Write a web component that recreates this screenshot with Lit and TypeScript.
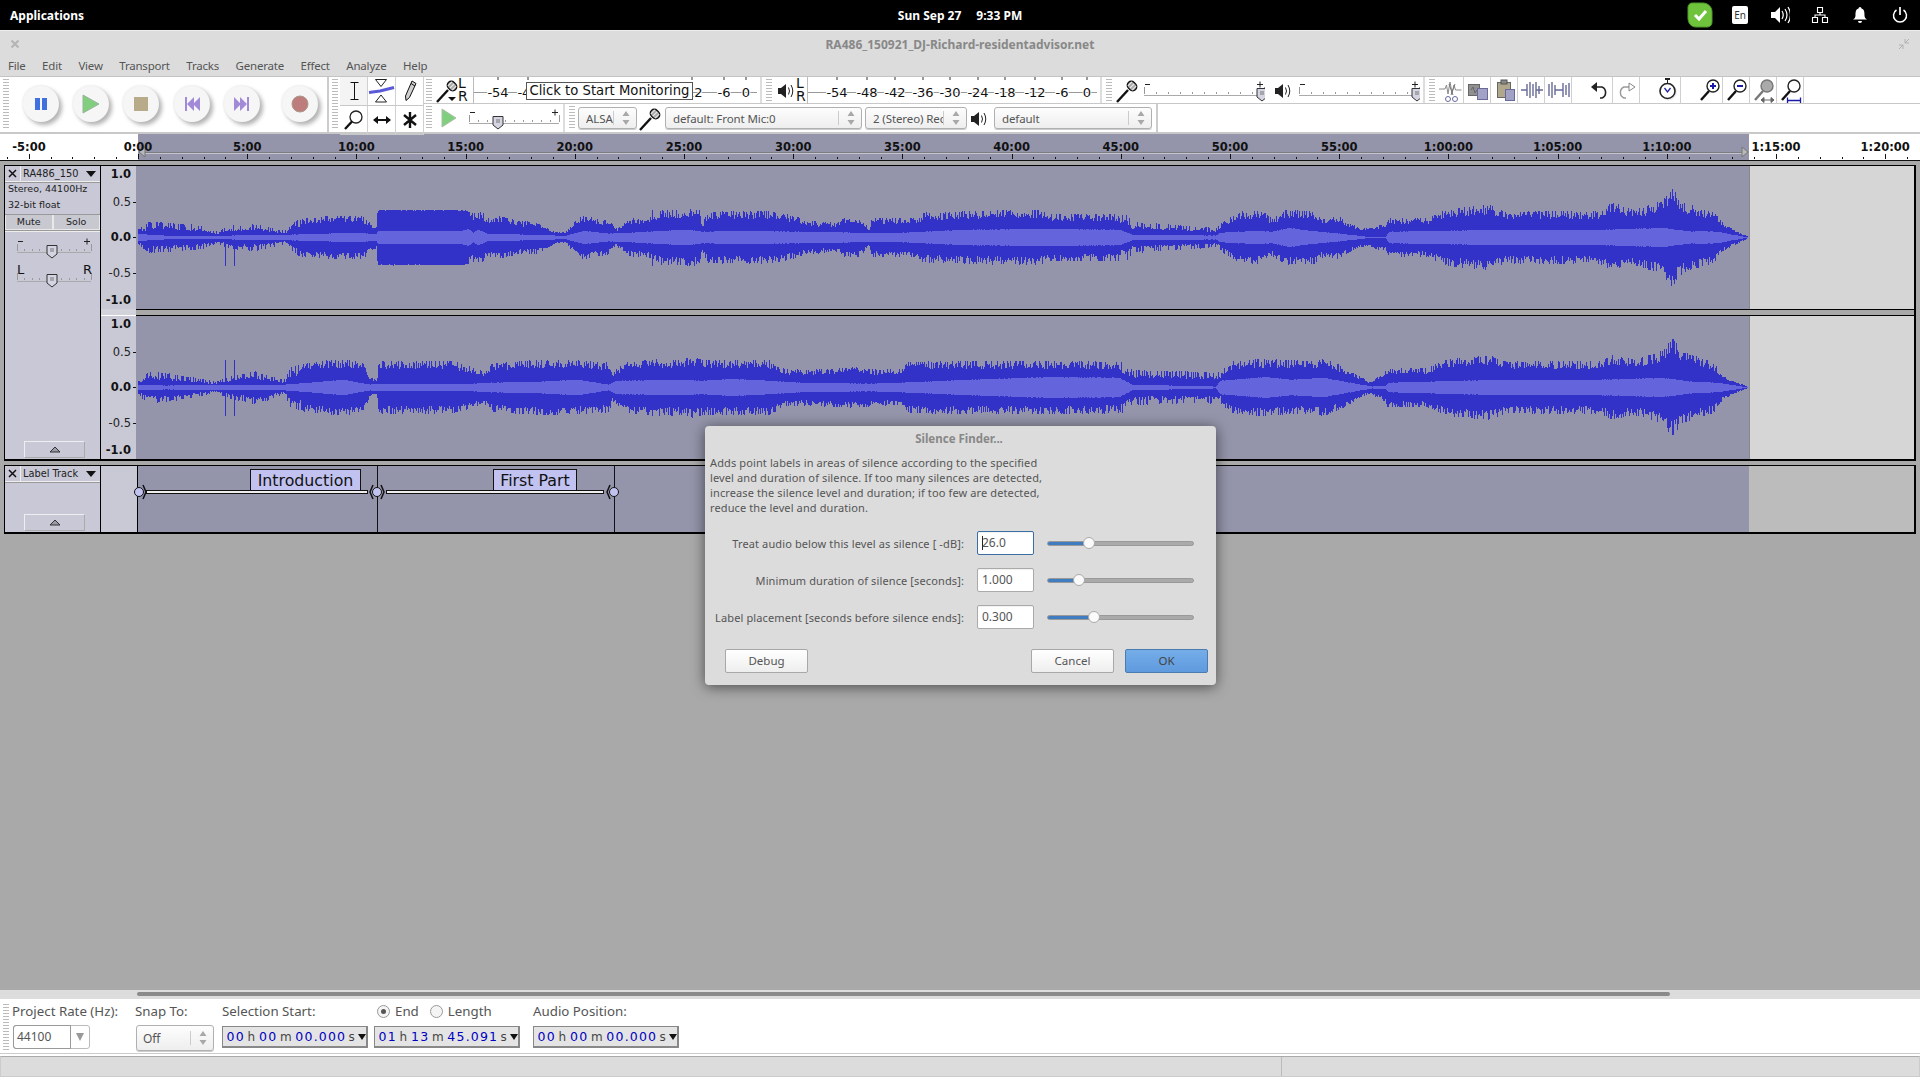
import { LitElement, html, css, svg } from "lit";
import { customElement } from "lit/decorators.js";

type Pt = [number, number];
const z = (x0: number, s: number, a: Pt[]): Pt[] => a.map(([x, v]) => [x0 + x / s, v] as Pt);

const P1: Pt[] = [
  ...z(130, 2.8, [[22,8],[50,16],[100,16],[200,12],[240,6],[280,12],[350,14],[430,7],[470,19],[560,22],[650,22],[680,12],[690,12],[692,28],[940,28],[955,25],[985,26],[1000,19],[1030,22],[1100,16],[1135,17],[1190,6],[1220,6],[1250,19],[1270,22],[1340,17],[1360,9],[1400,19],[1460,21],[1490,28]]),
  ...z(680, 2.8, [[0,28],[30,29],[55,28],[60,12],[75,26],[250,27],[340,20],[345,17],[440,15],[460,20],[500,20],[530,10],[535,20],[660,20],[680,25],[800,27],[1000,28],[1030,24],[1250,24],[1265,16],[1500,10]]),
  ...z(1220, 2.9, [[0,14],[60,27],[120,27],[150,19],[190,28],[270,27],[300,19],[340,22],[400,10],[440,10],[470,14],[480,12],[485,20],[600,20],[670,30],[780,33],[830,26],[950,27],[1100,27],[1140,36],[1200,28],[1280,37],[1310,50],[1340,36],[1430,26],[1460,14],[1500,6],[1530,1]]),
];
const R1: Pt[] = [
  ...z(130, 2.8, [[22,4],[50,3],[100,2],[280,2],[450,3],[640,5],[690,3],[692,7],[930,7],[945,9],[960,5],[975,8],[1000,4],[1100,3],[1190,2],[1220,2],[1270,7],[1340,4],[1400,5],[1540,8]]),
  ...z(680, 2.8, [[0,8],[55,7],[60,6],[150,7],[340,6],[500,5],[620,5],[800,8],[1040,9],[1230,8],[1265,3],[1500,2]]),
  ...z(1220, 2.9, [[0,5],[100,7],[150,6],[200,10],[260,7],[350,4],[420,1],[480,1],[490,6],[800,8],[1100,8],[1280,10],[1370,6],[1380,7],[1440,6],[1500,2],[1530,0]]),
];
const P2: Pt[] = [
  ...z(130, 2.8, [[22,8],[50,16],[100,15],[240,6],[283,12],[350,17],[430,8],[450,22],[550,28],[650,28],[670,10],[690,8],[695,27],[900,27],[990,17],[1015,25],[1140,28],[1230,28],[1340,25],[1350,14],[1380,26],[1490,29]]),
  ...z(680, 2.8, [[0,28],[30,31],[60,28],[250,28],[290,19],[340,18],[500,21],[535,19],[620,18],[628,26],[800,27],[1000,27],[1250,26],[1265,18],[1500,16]]),
  ...z(1220, 2.9, [[0,16],[30,26],[110,29],[260,27],[300,29],[340,24],[430,6],[470,13],[485,20],[600,20],[670,30],[780,33],[830,26],[950,27],[1100,27],[1140,33],[1200,28],[1280,37],[1310,50],[1340,36],[1430,26],[1460,12],[1500,5],[1530,1]]),
];
const R2: Pt[] = [
  ...z(130, 2.8, [[22,3],[100,2],[280,3],[430,3],[600,8],[670,3],[695,4],[960,4],[1010,5],[1140,6],[1250,8],[1340,3],[1360,7],[1540,8]]),
  ...z(680, 2.8, [[0,8],[60,7],[150,9],[340,5],[530,4],[620,5],[800,8],[1040,11],[1230,10],[1265,3],[1500,1]]),
  ...z(1220, 2.9, [[0,7],[130,11],[200,8],[300,10],[440,1],[480,2],[490,5],[800,8],[1100,8],[1280,10],[1370,6],[1440,5],[1530,0]]),
];

const lerp = (p: Pt[], x: number) => {
  if (x <= p[0][0]) return p[0][1];
  for (let i = 1; i < p.length; i++) {
    if (x <= p[i][0]) {
      const t = (x - p[i - 1][0]) / Math.max(0.01, p[i][0] - p[i - 1][0]);
      return p[i - 1][1] + (p[i][1] - p[i - 1][1]) * t;
    }
  }
  return p[p.length - 1][1];
};

const SPIKY: [number, number][] = [[140, 240], [240, 300], [1120, 1220]];

function wave(peak: Pt[], rms: Pt[], seed: number, smooth: [number, number][], topSpikes: number[], botSpikes: number[]) {
  let s = seed;
  const rnd = () => {
    s = (s * 1664525 + 1013904223) >>> 0;
    return ((s >>> 8) & 0xffff) / 65535;
  };
  const c = 71.5;
  let dark = "";
  let light = "";
  for (let x = 138; x < 1748; x++) {
    const a = lerp(peak, x);
    const r = lerp(rms, x);
    const sm = smooth.some(([l, h]) => x >= l && x <= h);
    const spiky = SPIKY.some(([l, h]) => x >= l && x <= h);
    const j = () => {
      if (sm) return 0.96 + 0.04 * rnd();
      if (spiky) return rnd() < 0.35 ? 0.9 + 0.1 * rnd() : 0.5 + 0.25 * rnd();
      return rnd() < 0.28 ? 0.95 + 0.05 * rnd() : 0.68 + 0.24 * rnd();
    };
    const t = topSpikes.some((v) => Math.abs(v - x) < 0.6) ? 28 : a * j();
    const b = botSpikes.some((v) => Math.abs(v - x) < 0.6) ? 28 : a * j();
    const rt = Math.max(0.5, r * (0.92 + 0.08 * rnd()));
    const px = x - 136 + 0.5;
    dark += `M${px} ${(c - t).toFixed(0)}V${(c + b).toFixed(0)}`;
    light += `M${px} ${(c - rt).toFixed(0)}V${(c + rt).toFixed(0)}`;
  }
  return { dark, light };
}

const W1 = wave(P1, R1, 7, [[377, 468]], [652], [225, 234, 652]);
const W2 = wave(P2, R2, 91, [], [225, 234, 652], [225, 234, 652]);

const rulerLabels: [string, number][] = [
  ["-5:00", 29], ["0:00", 138], ["5:00", 247.2], ["10:00", 356.4], ["15:00", 465.6], ["20:00", 574.8], ["25:00", 684],
  ["30:00", 793.2], ["35:00", 902.4], ["40:00", 1011.6], ["45:00", 1120.8], ["50:00", 1230], ["55:00", 1339.2],
  ["1:00:00", 1448.4], ["1:05:00", 1557.6], ["1:10:00", 1666.8], ["1:15:00", 1776], ["1:20:00", 1885.2],
];

const ruler = () => {
  const ticks: string[] = [];
  for (let i = -6; i <= 81; i++) {
    const x = Math.round(138 + i * 21.84) + 0.5;
    ticks.push(`M${x} ${i % 5 === 0 ? 20 : 23}V25`);
  }
  return html`<svg class="ruler" width="1920" height="26" viewBox="0 0 1920 26">
    <rect width="1920" height="26" fill="#fff"></rect>
    <rect x="138" width="1611" height="26" fill="#9494aa"></rect>
    <path d="M142 18.5H1743" stroke="#7c7c84" stroke-width="1"></path>
    <path d="M142 19.5H1743" stroke="#c4c4cc" stroke-width="1"></path>
    <path d="${ticks.join("")}" stroke="#111" stroke-width="1" fill="none"></path>
    <path d="M145 13V23L139 18Z" fill="#b8b8b8" stroke="#777"></path>
    <path d="M1742 13V23L1748 18Z" fill="#b8b8b8" stroke="#777"></path>
    ${rulerLabels.map(([t, x]) => svg`<text x="${x}" y="17" text-anchor="middle" class="rt">${t}</text>`)}
  </svg>`;
};

const meter = (w: number, labels: [string, number][]) => html`<svg class="block" width="${w}" height="27" viewBox="0 0 ${w} 27">
  <path d="M0 15.5H${w}" stroke="#999"></path>
  <path d="${labels.map(([, x]) => `M${x} 0V3`).join("")}" stroke="#333"></path>
  ${labels.map(([t, x]) => svg`<text x="${x}" y="20" text-anchor="middle" class="mt">${t}</text>`)}
</svg>`;

const slider = (w: number, th: number, minus = true) => html`<svg class="block" width="${w}" height="27" viewBox="0 0 ${w} 27">
  <path d="M1 18.5H${w - 1}" stroke="#aaa"></path>
  <path d="${Array.from({ length: 11 }, (_, i) => `M${Math.round(1 + (i * (w - 2)) / 10)}.5 ${i === 0 || i === 10 ? 10 : 15}V17`).join("")}" stroke="#999"></path>
  ${minus ? svg`<path d="M2 7.5H7" stroke="#222"></path><path d="M${w - 8} 7.5H${w - 2}M${w - 5} 4.5V10.5" stroke="#222"></path>` : ""}
  <path d="M${th - 5} 11.5h10v8.500l-5 4l-5 -4z" fill="#d4d4e2" stroke="#333"></path>
  <path d="M${th - 2} 15h4M${th - 2} 17h4" stroke="#777"></path>
</svg>`;

const I = {
  ibeam: html`<svg class="block" width="27" height="28"><path d="M10.500 5.500h8M14.500 5.500v17M10.500 22.500h8" stroke="#111" fill="none"></path></svg>`,
  env: html`<svg class="block" width="27" height="28"><path d="M7.5 2.5h11l-5.5 7zM13 18l5.5 7h-11z" fill="#fff" stroke="#222"></path><path d="M1 15.5 L12 14 L26 10.5" stroke="#5a5ad8" stroke-width="3" fill="none"></path></svg>`,
  pencil: html`<svg class="block" width="27" height="28"><path d="M16 4l4 2.5-6.5 14-3.5 3-.5-4.5z" fill="#d0d0d0" stroke="#111"></path><path d="M15 6.5l4 2.5" stroke="#111"></path></svg>`,
  zoom: html`<svg class="block" width="27" height="28"><circle cx="16" cy="11" r="6" fill="#fff" stroke="#222" stroke-width="1.3"></circle><path d="M12 15.5L5 23" stroke="#111" stroke-width="2.4"></path></svg>`,
  shift: html`<svg class="block" width="27" height="28"><path d="M6 14h16" stroke="#111" stroke-width="2"></path><path d="M10 10L5 14l5 4zM18 10l5 4-5 4z" fill="#111"></path></svg>`,
  multi: html`<svg class="block" width="27" height="28"><path d="M14 6v16M8 9l12 10M20 9L8 19" stroke="#111" stroke-width="2.4"></path></svg>`,
  mic: (drop = true, w = 28) => html`<svg class="block" width="${w}" height="27"><path d="M14 13L3 25" stroke="#111" stroke-width="2.4"></path><g transform="rotate(45 18 9)"><rect x="13" y="5" width="10" height="8" rx="4" fill="#aaa" stroke="#111" stroke-width="1.4"></rect><path d="M15 6v6M18 6v6M21 6v6" stroke="#eee"></path></g>${drop ? svg`<path d="M14 20h8l-4 4z" fill="#111"></path>` : ""}</svg>`,
  spk: (w = 22) => html`<svg class="block" width="${w}" height="27"><path d="M4 11h3l5-4v14l-5-4H4z" fill="#222"></path><path d="M14.5 10.5q2 3.5 0 7M17 8q3.5 6 0 12" stroke="#222" fill="none"></path></svg>`,
  play: html`<svg class="block" width="31" height="28"><path d="M8 5l14 9-14 9z" fill="#7fcf7f" stroke="#aebfa8"></path></svg>`,
  cut: html`<svg class="block" width="27" height="27"><path d="M2 13h6l1.5-4 1.5 9 2-12 2 11 2-8 1.500 5h6" stroke="#8a8a8a" fill="none"></path><path d="M12 8l4 11M18 8l-4 11" stroke="#777"></path><circle cx="11" cy="23" r="2.500" fill="none" stroke="#6a6aa0"></circle><circle cx="18" cy="23" r="2.500" fill="none" stroke="#6a6aa0"></circle></svg>`,
  copy: html`<svg class="block" width="27" height="27"><rect x="4.500" y="8.500" width="11" height="11" fill="#909090" stroke="#666"></rect><rect x="13.500" y="12.500" width="10" height="11" fill="#a2a2c6" stroke="#6a6a98"></rect><path d="M7 14l2-3 2 6 2-3" stroke="#666" fill="none"></path></svg>`,
  paste: html`<svg class="block" width="27" height="27"><rect x="6.500" y="6.500" width="13" height="15" fill="#b0a88c" stroke="#666"></rect><rect x="10" y="4" width="6" height="4" fill="#888" stroke="#555"></rect><rect x="14.500" y="13.500" width="9" height="11" fill="#a2a2c6" stroke="#6a6a98"></rect></svg>`,
  trim: html`<svg class="block" width="27" height="27"><path d="M3 14h6M9 8v12M12 6v16M15 8v12M18 6v16M21 10v8M18 14h7" stroke="#666a96" stroke-width="1.4" fill="none"></path></svg>`,
  sil: html`<svg class="block" width="27" height="27"><path d="M4 8v12M7 6v16M10 9v10M10 14h8M18 7v14M21 9v10M24 7v14" stroke="#666a96" stroke-width="1.4" fill="none"></path></svg>`,
  undo: html`<svg class="block" width="27" height="27"><path d="M7 11h9a6 6 0 0 1 0 11h-2" stroke="#222" stroke-width="1.6" fill="none"></path><path d="M11 6L5 11l6 5z" fill="#222"></path></svg>`,
  redo: html`<svg class="block" width="27" height="27"><path d="M20 11h-9a6 6 0 0 0 0 11h2" stroke="#999" stroke-width="1.4" fill="none"></path><path d="M16 7l6 4-6 4z" fill="#fff" stroke="#888"></path></svg>`,
  timer: html`<svg class="block" width="27" height="27"><rect x="11" y="2" width="5" height="2" fill="#222"></rect><path d="M13.500 4v3" stroke="#222"></path><circle cx="14.500" cy="16" r="8.500" fill="#ddd" opacity=".5"></circle><circle cx="13.500" cy="15" r="7.500" fill="#fff" stroke="#222" stroke-width="1.600"></circle><path d="M10.500 12l3 4 3-4" stroke="#2222a0" stroke-width="1.300" fill="none"></path></svg>`,
  zm: (k: string) => html`<svg class="block" width="27" height="27"><path d="M13 15L5 24" stroke="${k === "fit" ? "#777" : "#111"}" stroke-width="2.400"></path><circle cx="17" cy="10" r="6" fill="${k === "fit" ? "#aaa" : "#fff"}" stroke="${k === "fit" ? "#777" : "#222"}" stroke-width="1.400"></circle>
    ${k === "in" ? svg`<path d="M14 10h6M17 7v6" stroke="#1a1aa8" stroke-width="2"></path>` : ""}
    ${k === "out" ? svg`<path d="M14 10h6" stroke="#1a1aa8" stroke-width="2"></path>` : ""}
    ${k === "fit" ? svg`<path d="M11 24h13M11 24l3-2.500v5zM24 24l-3-2.500v5z" stroke="#666" fill="#666"></path>` : ""}
    ${k === "sel" ? svg`<path d="M10 24.500h14M10.500 21.500v6M23.500 21.500v6" stroke="#1a1aa8" stroke-width="1.300"></path>` : ""}
  </svg>`,
  x: html`<svg class="block" width="15" height="15"><path d="M4 4l7 7M11 4l-7 7" stroke="#111" stroke-width="1.500"></path></svg>`,
  updown: html`<svg class="block" width="10" height="18"><path d="M1.500 7L5 2l3.500 5zM1.500 11L5 16l3.500-5z" fill="#a8a8a8"></path></svg>`,
  collapse: html`<svg class="block" width="12" height="7"><path d="M1 6L6 1l5 5z" fill="#9a9aa8" stroke="#333"></path></svg>`,
  handle: (left: boolean, right: boolean) => html`<svg class="block" width="16" height="20" viewBox="0 0 16 20">
    ${left ? svg`<path d="M4 3L1 10l3 7" fill="none" stroke="#111" stroke-width="1.500"></path>` : ""}
    ${right ? svg`<path d="M12 3l3 7-3 7" fill="none" stroke="#111" stroke-width="1.500"></path>` : ""}
    <circle cx="8" cy="10" r="4.500" fill="#c2c2ee" stroke="#111"></circle>
  </svg>`,
  ok: html`<svg class="block" width="26" height="26" viewBox="0 0 26 26"><path d="M5 1h11c4 0 9 3 9 9v10c0 3-2 5-5 5H9c-5 0-8-4-8-9V5c0-2 2-4 4-4z" fill="#6fc23c" stroke="#4f9a28"></path><path d="M8 13l4 4 7-8" stroke="#fff" stroke-width="3" fill="none"></path></svg>`,
  vol: html`<svg class="block" width="20" height="18"><path d="M1 6h4l5-5v16l-5-5H1z" fill="#fff"></path><path d="M12 5q2.500 4 0 8M15 3q4 6 0 12M18 1q5 8 0 16" fill="none" stroke="#fff" stroke-width="1.200"></path></svg>`,
  net: html`<svg class="block" width="18" height="18"><path d="M6.500 1.500h5v5h-5zM1.500 11.500h5v5h-5zM11.500 11.500h5v5h-5zM9 6.500v2.500M4 11.500V9h10v2.500" fill="none" stroke="#fff" stroke-width="1.100"></path></svg>`,
  bell: html`<svg class="block" width="16" height="18"><path d="M8 1a1.500 1.500 0 0 1 1.500 1.500c3 1 3 4 3 7 0 2 1 3 2.500 4H1c1.500-1 2.500-2 2.500-4 0-3 0-6 3-7A1.500 1.500 0 0 1 8 1zM6 15h4a2 2 0 0 1-4 0z" fill="#fff"></path></svg>`,
  power: html`<svg class="block" width="16" height="18"><path d="M8 1v8" stroke="#fff" stroke-width="1.700"></path><path d="M4.500 4a6.500 6.500 0 1 0 7 0" stroke="#fff" stroke-width="1.500" fill="none"></path></svg>`,
  unmax: html`<svg class="block" width="12" height="12"><path d="M11 1L7 5M7 1v4h4M1 11l4-4M1 7h4v4" stroke="#b0b0b0" fill="none"></path></svg>`,
  wx: html`<svg class="block" width="10" height="10"><path d="M1.500 1.500l7 7M8.500 1.500l-7 7" stroke="#b4b4b4" stroke-width="2"></path></svg>`,
};

const MENUS = ["File", "Edit", "View", "Transport", "Tracks", "Generate", "Effect", "Analyze", "Help"];
const RDB = [1.0, 0.5, 0.0, -0.5, -1.0];

@customElement("app-root")
export class AppRoot extends LitElement {
  static styles = css`
    :host { display: block; position: relative; width: 1920px; height: 1080px; overflow: hidden; background: #a9a9a9; font-family: "Noto Sans", sans-serif; font-size: 12px; color: #555; }
    .root { display: flex; flex-direction: column; height: 1080px; }
    .block { display: block; flex: none; }
    .panel { height: 31px; box-sizing: border-box; background: #000; color: #fff; display: grid; grid-template-columns: 1fr auto 1fr; align-items: center; border-bottom: 1px solid #eee; font-weight: 700; font-size: 12px; flex: none; }
    .panel-l { padding-left: 10px; }
    .clock { display: flex; gap: 15px; }
    .tray { display: flex; justify-content: flex-end; }
    .tray-i { width: 40px; height: 30px; display: flex; align-items: center; justify-content: center; }
    .en { width: 16px; height: 18px; background: #fff; border-radius: 2px; color: #333; font-size: 10px; font-weight: 400; display: flex; align-items: center; justify-content: center; }
    .wintitle { height: 26px; background: #dcdcdc; display: grid; grid-template-columns: 1fr auto 1fr; align-items: center; flex: none; font-weight: 700; color: #888; }
    .wx { padding-left: 10px; }
    .unmax { display: flex; justify-content: flex-end; padding-right: 10px; }
    .menubar { height: 19px; background: #dcdcdc; display: flex; padding-left: 8px; gap: 16.500px; flex: none; line-height: 18px; font-size: 11.500px; letter-spacing: -0.2px; }
    .toolbars { position: relative; display: flex; height: 58px; background: #fff; border-top: 1px solid #c4c4c4; border-bottom: 2px solid #c8c8c8; box-sizing: border-box; flex: none; }
    .grip { flex: none; width: 6px; margin: 2px 2px 2px 3px; background: repeating-linear-gradient(#bbb 0 1px, #fff 1px 3px); }
    .transport { display: flex; width: 329px; flex: none; align-items: center; border-right: 2px solid #ccc; box-sizing: border-box; padding-bottom: 1px; }
    .transport .grip { align-self: stretch; }
    .tbtn { flex: none; width: 36px; height: 36px; border-radius: 50%; background: #f6f6f6; box-shadow: 3px 3px 4px rgba(0,0,0,.3), -1px -1px 2px rgba(0,0,0,.06); display: flex; align-items: center; justify-content: center; margin-right: 14.200px; }
    .tbtn.rec { margin-left: 8px; }
    .tbtn.first { margin-left: 12px; }
    .toolgrip { display: flex; width: 11px; flex: none; }
    .tools { width: 83px; flex: none; display: grid; grid-template-columns: repeat(3, 1fr); grid-template-rows: 1fr 1fr; }
    .tools > div, .ecell { border-right: 1px solid #d0d0d0; border-bottom: 1px solid #c8c8c8; box-sizing: border-box; display: flex; align-items: center; justify-content: center; }
    .tools > div.on { background: #f4f4f4; }
    .rows { flex: 1; display: flex; flex-direction: column; min-width: 0; }
    .row { height: 28px; display: flex; align-items: center; flex: none; box-sizing: border-box; }
    .row.top { height: 27px; border-bottom: 1px solid #c8c8c8; }
    .row > .grip { align-self: stretch; }
    .lr { display: flex; flex-direction: column; box-sizing: border-box; width: 12px; font-family: "DejaVu Sans", sans-serif; color: #111; font-size: 14px; line-height: 13.500px; flex: none; border-right: 1px solid #bbb; overflow: hidden; }
    .lr.w { width: 16px; }
    .grip2 { align-self: stretch; border-left: 2px solid #ddd; padding-left: 1px; display: flex; flex: none; margin-left: 3px; }
    .ecell { width: 27px; height: 27px; flex: none; }
    .gap14 { width: 14px; flex: none; }
    .gap15 { width: 15px; flex: none; }
    .gap3 { width: 3px; flex: none; }
    .gap6 { width: 6px; flex: none; }
    .gap7 { width: 7px; flex: none; }
    .combo { height: 22px; box-sizing: border-box; border: 1px solid #b0b0b0; border-radius: 3px; background: linear-gradient(#fdfdfd, #eeeeee); display: flex; align-items: center; padding-left: 7px; flex: none; white-space: nowrap; overflow: hidden; box-shadow: 0 1px 0 #ccc; font-size: 11.500px; letter-spacing: -0.1px; }
    .combo .txt { flex: 1; overflow: hidden; }
    .combo .spin { flex: none; display: flex; align-items: center; border-left: 1px solid #ccc; height: 14px; padding: 0 5px 0 7px; }
    .c-alsa { width: 59px; margin-left: 1px; }
    .c-dev { width: 197px; }
    .c-ch { width: 102px; margin-left: 3px; }
    .c-out { width: 158px; }
    .mt-end { flex: 1; align-self: stretch; border-left: 2px solid #ccc; margin-left: 4px; }
    .tooltip { position: absolute; left: 526px; top: 5px; width: 167px; height: 18px; box-sizing: border-box; background: #fff; border: 1px solid #555; font-family: "DejaVu Sans", sans-serif; font-size: 13.200px; line-height: 16px; color: #111; text-align: center; white-space: nowrap; }
    .rt { font: 700 11.500px "DejaVu Sans", sans-serif; fill: #111; }
    .mt { font: 400 13px "DejaVu Sans", sans-serif; fill: #111; paint-order: stroke; stroke: #fff; stroke-width: 2px; }
    .ruler { display: block; flex: none; border-bottom: 1px solid #111; }

    .work { flex: 1; padding: 4px 4px 0 4px; display: flex; flex-direction: column; gap: 4px; min-height: 0; font-family: "DejaVu Sans", sans-serif; color: #222; }
    .track { display: flex; width: 1912px; box-sizing: border-box; border: 1px solid #000; border-right-width: 2px; border-bottom-width: 2px; background: #c9c9d6; flex: none; }
    .t1 { height: 296px; }
    .t2 { height: 69px; }
    .ctrl { width: 96px; flex: none; box-sizing: border-box; border-right: 1px solid #000; display: flex; flex-direction: column; background: #c8c8d6; font-size: 9.500px; color: #222; }
    .ctitle { height: 15px; display: flex; flex: none; border-bottom: 1px solid #eee; box-shadow: 0 1px 0 #999; }
    .cx { width: 15px; border-right: 1px solid #eee; display: flex; }
    .cname { flex: 1; display: flex; align-items: center; padding-left: 2px; justify-content: space-between; padding-right: 4px; font-size: 9.800px; white-space: nowrap; }
    .tri { width: 0; height: 0; border-left: 5.500px solid transparent; border-right: 5.500px solid transparent; border-top: 6px solid #111; }
    .info { padding: 0 0 0 3px; margin-top: -1px; line-height: 16px; height: 34px; box-sizing: border-box; border-bottom: 1px solid #999; flex: none; }
    .ms { display: flex; height: 15px; border-bottom: 1px solid #999; box-shadow: 0 1px 0 #eee; flex: none; }
    .ms > div { flex: 1; text-align: center; border: 1px solid #e8e8e8; border-top: 0; line-height: 13px; background: #c8c8d0; }
    .sl { padding: 3px 0 0 11px; flex: none; }
    .sl2 { padding: 2px 0 0 11px; position: relative; flex: none; }
    .spacer { flex: 1; }
    .coll { height: 17px; width: 61px; margin: 0 0 1px 19px; box-sizing: border-box; border: 1px solid #eee; border-right-color: #aaa; border-bottom-color: #aaa; display: flex; align-items: center; justify-content: center; flex: none; }
    .lr-l, .lr-r { position: absolute; top: 1px; font-size: 13px; line-height: 15px; color: #111; }
    .lr-l { left: 12px; }
    .lr-r { left: 78px; }
    .vr { width: 35px; flex: none; display: flex; flex-direction: column; }
    .vrc { height: 143px; position: relative; flex: none; background: #c9c9d6; }
    .vrgap { height: 7px; background: #d2d2da; border-bottom: 1px solid #fff; box-sizing: border-box; flex: none; }
    .vl { position: absolute; right: 5px; font-size: 11.500px; line-height: 12px; white-space: nowrap; color: #222; }
    .vl.b { font-weight: 700; color: #111; }
    .vt { position: absolute; right: 0; width: 3px; height: 1px; background: #111; }
    .chans { flex: 1; display: flex; flex-direction: column; min-width: 0; }
    .chan { height: 143px; display: flex; flex: none; background: #d6d6d6; }
    .sel { width: 1613px; flex: none; background: #9494aa; border-right: 1px solid #888; box-sizing: content-box; }
    .chgap { height: 7px; background: #a9a9a9; border-top: 1px solid #000; border-bottom: 1px solid #000; box-sizing: border-box; flex: none; }
    .lblank { width: 37px; flex: none; background: #c9c9d6; border-right: 1px solid #000; box-sizing: border-box; }
    .larea { flex: 1; display: flex; position: relative; background: #bcbcbc; }
    .lsel { width: 1611px; flex: none; background: #9494aa; }
    .lbl { position: absolute; top: 3px; height: 22px; box-sizing: border-box; background: #c2c2f0; border: 1px solid #111; font-size: 15.800px; line-height: 21px; color: #111; text-align: center; white-space: nowrap; }
    .lbl.a { left: 112px; width: 111px; }
    .lbl.b { left: 355px; width: 84px; }
    .vline { position: absolute; top: 0; bottom: 0; width: 1px; background: #111; }
    .hline { position: absolute; top: 24px; height: 4px; box-sizing: border-box; background: #eee; border: 1px solid #111; }
    .h { position: absolute; top: 16px; }

    .scroll { height: 8px; background: #dcdcdc; flex: none; padding: 2px 0 2px 137px; box-sizing: border-box; display: flex; }
    .thumb { width: 1533px; background: #8a8a8a; border-radius: 2px; }
    .selbar { height: 56px; background: #fff; display: flex; flex: none; box-sizing: border-box; border-top: 1px solid #ddd; border-bottom: 1px solid #ccc; padding-top: 4px; font-size: 13.300px; }
    .selbar .grip { height: 46px; margin: 1px 3px 0 3px; align-self: flex-start; }
    .col { display: flex; flex-direction: column; flex: none; }
    .cl { height: 22px; line-height: 16px; white-space: nowrap; }
    .c1 { width: 123px; }
    .c2 { width: 87px; }
    .c3 { width: 152px; }
    .c4 { width: 159px; }
    .radios { display: flex; align-items: center; gap: 5px; padding: 0 0 6px 3px; box-sizing: border-box; }
    .radio { width: 13px; height: 13px; border: 1px solid #999; border-radius: 50%; box-sizing: border-box; display: flex; align-items: center; justify-content: center; background: #f4f4f4; flex: none; }
    .radio i { width: 5px; height: 5px; border-radius: 50%; background: #555; }
    .rl2 { margin-left: 6px; }
    .c-rate { width: 77px; height: 24px; box-sizing: border-box; border: 1px solid #bbb; border-radius: 3px; display: flex; margin-left: 1px; font-size: 12px; }
    .c-rate .v { width: 53px; padding-left: 3px; line-height: 22px; border: 1px solid #999; border-radius: 3px 0 0 3px; margin: -1px 0 -1px -1px; }
    .c-rate .dd { flex: 1; display: flex; align-items: center; justify-content: center; }
    .dn { width: 0; height: 0; border-left: 4px solid transparent; border-right: 4px solid transparent; border-top: 8px solid #999; }
    .c-snap { width: 78px; height: 26px; margin-left: 1px; padding-left: 6px; font-size: 12px; }
    .time { width: 146px; height: 22px; box-sizing: border-box; border: 1px solid #888; border-bottom-width: 2px; border-right-width: 2px; background: #e4e4e4; display: flex; align-items: center; font-family: "DejaVu Sans", sans-serif; font-size: 12.500px; color: #0000c0; padding-left: 3px; margin-top: 1px; }
    .time .d { flex: none; text-align: center; width: 9.200px; }
    .time .dot { flex: none; width: 5px; text-align: center; }
    .time .u { flex: none; text-align: center; color: #444; font-size: 12px; }
    .time .uh { width: 14px; }
    .time .um { width: 18px; }
    .time .us { width: 12px; }
    .time .arrow { width: 0; height: 0; border-left: 4px solid transparent; border-right: 4px solid transparent; border-top: 6px solid #111; margin-left: 0; }
    .status { height: 26px; flex: none; background: #fff; padding-top: 2px; box-sizing: border-box; }
    .status-in { height: 21px; background: #dcdcdc; border: 1px solid #ccc; border-top-color: #aaa; box-sizing: border-box; display: flex; }
    .status-a { width: 1280px; border-right: 1px solid #bbb; flex: none; }

    .dialog { position: absolute; left: 705px; top: 426px; width: 511px; height: 259px; background: #dcdcdc; border-radius: 4px; box-shadow: 0 2px 14px rgba(0,0,0,.55); box-sizing: border-box; padding: 0 8px 0 5px; display: flex; flex-direction: column; font-family: "Noto Sans", sans-serif; font-size: 11px; letter-spacing: 0.12px; color: #555; }
    .dtitle { text-align: center; font-weight: 700; font-size: 11.500px; letter-spacing: 0; color: #888; height: 29px; line-height: 26px; flex: none; }
    .ddesc { line-height: 15px; height: 76px; flex: none; white-space: nowrap; }
    .drow { height: 24px; margin-bottom: 13px; display: grid; grid-template-columns: 254px 57px 147px; column-gap: 13px; align-items: center; flex: none; }
    .drow .dl { text-align: right; white-space: nowrap; }
    .inp { height: 24px; box-sizing: border-box; border: 1px solid #aaa; border-radius: 2px; background: #fff; padding-left: 4px; line-height: 22px; font-size: 12px; letter-spacing: 0; box-shadow: inset 0 1px 1px rgba(0,0,0,.06); }
    .inp.f { border-color: #3a6ea5; }
    .inp.f i { display: inline-block; width: 1px; height: 14px; background: #222; margin-right: -1px; vertical-align: -3px; }
    .track2 { position: relative; height: 5px; border-radius: 3px; background: #aaa; border: 1px solid #999; box-sizing: border-box; }
    .fill { position: absolute; left: 0; top: 0; bottom: 0; background: #3f7cc0; border-radius: 3px 0 0 3px; }
    .knob { position: absolute; top: -5px; width: 12px; height: 12px; margin-left: -6px; border-radius: 50%; background: #fafafa; border: 1px solid #aaa; box-sizing: border-box; }
    .dbtns { display: flex; gap: 11px; padding: 7px 0 0 15px; flex: none; }
    .btn { width: 83px; height: 24px; box-sizing: border-box; border: 1px solid #a8a8a8; border-radius: 2px; background: linear-gradient(#fff, #eee); text-align: center; line-height: 22px; color: #555; font-size: 11.500px; letter-spacing: 0; }
    .btn.ok { background: linear-gradient(#75ade8, #5f9ade); border-color: #4a7cb0; color: #444; }
    .dspace { margin-right: 212px; }
  `;

  private tool(c: unknown, on = false) {
    return html`<div class=${on ? "on" : ""}>${c}</div>`;
  }

  private vruler() {
    return RDB.map((v, i) => {
      const pos = [7.5, 36, 71, 107, 134][i];
      const t = v.toFixed(1);
      return html`<span class="vl ${i % 2 === 0 ? "b" : ""}" style="top:${pos - 6}px">${t}</span>
        ${i > 0 && i < 4 ? html`<span class="vt" style="top:${pos}px"></span>` : ""}`;
    });
  }

  private time(h: string, m: string, s: string) {
    const ds = (t: string) => [...t].map((c) => html`<span class=${c === "." ? "dot" : "d"}>${c}</span>`);
    return html`<div class="time">${ds(h)}<span class="u uh">h</span>${ds(m)}<span class="u um">m</span>${ds(s)}<span class="u us">s</span><span class="arrow"></span></div>`;
  }

  private dslider(label: string, val: string, pos: number, focus = false) {
    return html`<div class="drow">
      <div class="dl">${label}</div>
      <div class="inp ${focus ? "f" : ""}">${focus ? html`<i></i>` : ""}${val}</div>
      <div class="track2"><div class="fill" style="width:${pos}px"></div><div class="knob" style="left:${pos}px"></div></div>
    </div>`;
  }

  render() {
    const recLabels: [string, number][] = [["-54", 24], ["-48", 54], ["-12", 218], ["-6", 250], ["0", 272]];
    const playLabels: [string, number][] = [["-54", 837 - 808], ["-48", 867 - 808], ["-42", 895 - 808], ["-36", 923 - 808], ["-30", 950 - 808], ["-24", 978 - 808], ["-18", 1005 - 808], ["-12", 1035 - 808], ["-6", 1062 - 808], ["0", 1087 - 808]];
    return html`<div class="root">
      <div class="panel">
        <div class="panel-l">Applications</div>
        <div class="clock"><span>Sun Sep 27</span><span>9:33 PM</span></div>
        <div class="tray">
          <div class="tray-i">${I.ok}</div>
          <div class="tray-i"><div class="en">En</div></div>
          <div class="tray-i">${I.vol}</div>
          <div class="tray-i">${I.net}</div>
          <div class="tray-i">${I.bell}</div>
          <div class="tray-i">${I.power}</div>
        </div>
      </div>
      <div class="wintitle"><div class="wx">${I.wx}</div><div>RA486_150921_DJ-Richard-residentadvisor.net</div><div class="unmax">${I.unmax}</div></div>
      <div class="menubar">${MENUS.map((m) => html`<span>${m}</span>`)}</div>

      <div class="toolbars">
        <div class="transport">
          <div class="grip"></div>
          <div class="tbtn first"><svg class="block" width="16" height="14"><path d="M2 1h5v12H2zM9 1h5v12H9z" fill="#3f6fe0"></path></svg></div>
          <div class="tbtn"><svg class="block" width="18" height="20"><path d="M1 1l16 9-16 9z" fill="#7fcf7f" stroke="#9ab49a"></path></svg></div>
          <div class="tbtn"><svg class="block" width="14" height="14"><rect width="14" height="14" fill="#b8ab8a"></rect></svg></div>
          <div class="tbtn"><svg class="block" width="16" height="14"><path d="M1 0h2v14H1zM10 0v14L3 7zM16 0v14L9 7z" fill="#a28ad8"></path></svg></div>
          <div class="tbtn"><svg class="block" width="16" height="14"><path d="M13 0h2v14h-2zM6 0v14l7-7zM0 0v14l7-7z" fill="#a28ad8"></path></svg></div>
          <div class="tbtn rec"><svg class="block" width="18" height="18"><circle cx="9" cy="9" r="8" fill="#bf7c7c" stroke="#a98"></circle></svg></div>
        </div>
        <div class="toolgrip"><div class="grip"></div></div>
        <div class="tools">
          ${this.tool(I.ibeam, true)}${this.tool(I.env)}${this.tool(I.pencil)}
          ${this.tool(I.zoom)}${this.tool(I.shift)}${this.tool(I.multi)}
        </div>
        <div class="rows">
          <div class="row top">
            <div class="grip"></div>
            ${I.mic(true, 24)}
            <div class="lr w"><span>L</span><span>R</span></div>
            ${meter(283, recLabels)}
            <div class="grip2"><div class="grip"></div></div>
            ${I.spk(22)}
            <div class="lr"><span>L</span><span>R</span></div>
            ${meter(289, playLabels)}
            <div class="grip2"><div class="grip"></div></div>
            ${I.mic(false, 26)}
            <div class="gap3"></div>
            ${slider(122, 119)}
            <div class="gap6"></div>
            ${I.spk(20)}
            <div class="gap7"></div>
            ${slider(122, 119)}
            <div class="grip2"><div class="grip"></div></div>
            <div class="ecell">${I.cut}</div><div class="ecell">${I.copy}</div><div class="ecell">${I.paste}</div><div class="ecell">${I.trim}</div><div class="ecell">${I.sil}</div>
            <div class="gap14"></div>
            <div class="ecell">${I.undo}</div><div class="ecell">${I.redo}</div>
            <div class="gap14"></div>
            <div class="ecell">${I.timer}</div>
            <div class="gap15"></div>
            <div class="ecell">${I.zm("in")}</div><div class="ecell">${I.zm("out")}</div><div class="ecell">${I.zm("fit")}</div><div class="ecell">${I.zm("sel")}</div>
          </div>
          <div class="row">
            <div class="grip"></div>
            ${I.play}
            <div class="gap3"></div>
            ${slider(92, 30)}
            <div class="grip2"><div class="grip"></div></div>
            <div class="combo c-alsa"><span class="txt">ALSA</span><span class="spin">${I.updown}</span></div>
            ${I.mic(false, 28)}
            <div class="combo c-dev"><span class="txt">default: Front Mic:0</span><span class="spin">${I.updown}</span></div>
            <div class="combo c-ch"><span class="txt">2 (Stereo) Rec</span><span class="spin">${I.updown}</span></div>
            ${I.spk(27)}
            <div class="combo c-out"><span class="txt">default</span><span class="spin">${I.updown}</span></div>
            <div class="mt-end"></div>
          </div>
        </div>
        <div class="tooltip">Click to Start Monitoring</div>
      </div>

      ${ruler()}

      <div class="work">
        <div class="track t1">
          <div class="ctrl">
            <div class="ctitle"><div class="cx">${I.x}</div><div class="cname">RA486_150<span class="tri"></span></div></div>
            <div class="info">Stereo, 44100Hz<br />32-bit float</div>
            <div class="ms"><div>Mute</div><div>Solo</div></div>
            <div class="sl">${slider(76, 36)}</div>
            <div class="sl2"><span class="lr-l">L</span><span class="lr-r">R</span>${slider(76, 36, false)}</div>
            <div class="spacer"></div>
            <div class="coll">${I.collapse}</div>
          </div>
          <div class="vr">
            <div class="vrc">${this.vruler()}</div>
            <div class="vrgap"></div>
            <div class="vrc">${this.vruler()}</div>
          </div>
          <div class="chans">
            <div class="chan"><div class="sel">
              <svg class="block" width="1613" height="143" shape-rendering="crispEdges"><path d="${W1.dark}" stroke="#3232c8" fill="none"></path><path d="${W1.light}" stroke="#6464dc" fill="none"></path></svg>
            </div></div>
            <div class="chgap"></div>
            <div class="chan"><div class="sel">
              <svg class="block" width="1613" height="143" shape-rendering="crispEdges"><path d="${W2.dark}" stroke="#3232c8" fill="none"></path><path d="${W2.light}" stroke="#6464dc" fill="none"></path></svg>
            </div></div>
          </div>
        </div>
        <div class="track t2">
          <div class="ctrl">
            <div class="ctitle"><div class="cx">${I.x}</div><div class="cname">Label Track<span class="tri"></span></div></div>
            <div class="spacer"></div>
            <div class="coll">${I.collapse}</div>
          </div>
          <div class="lblank"></div>
          <div class="larea">
            <div class="lsel"></div>
            <div class="hline" style="left:8px;width:222px"></div>
            <div class="hline" style="left:248px;width:218px"></div>
            <div class="vline" style="left:239px"></div>
            <div class="vline" style="left:476px"></div>
            <div class="lbl a">Introduction</div>
            <div class="lbl b">First Part</div>
            <div class="h" style="left:-7px">${I.handle(false, true)}</div>
            <div class="h" style="left:231px">${I.handle(true, true)}</div>
            <div class="h" style="left:468px">${I.handle(true, false)}</div>
          </div>
        </div>
      </div>

      <div class="scroll"><div class="thumb"></div></div>
      <div class="selbar">
        <div class="grip"></div>
        <div class="col c1"><div class="cl">Project Rate (Hz):</div><div class="c-rate"><div class="v">44100</div><div class="dd"><span class="dn"></span></div></div></div>
        <div class="col c2"><div class="cl">Snap To:</div><div class="combo c-snap"><span class="txt">Off</span><span class="spin">${I.updown}</span></div></div>
        <div class="col c3"><div class="cl">Selection Start:</div>${this.time("00", "00", "00.000")}</div>
        <div class="col c4"><div class="cl radios"><span class="radio"><i></i></span>End<span class="radio rl2"></span>Length</div>${this.time("01", "13", "45.091")}</div>
        <div class="col"><div class="cl">Audio Position:</div>${this.time("00", "00", "00.000")}</div>
      </div>
      <div class="status"><div class="status-in"><div class="status-a"></div></div></div>
    </div>
    <div class="dialog">
      <div class="dtitle">Silence Finder...</div>
      <div class="ddesc">Adds point labels in areas of silence according to the specified<br />level and duration of silence. If too many silences are detected,<br />increase the silence level and duration; if too few are detected,<br />reduce the level and duration.</div>
      ${this.dslider("Treat audio below this level as silence [ -dB]:", "26.0", 41, true)}
      ${this.dslider("Minimum duration of silence [seconds]:", "1.000", 31)}
      ${this.dslider("Label placement [seconds before silence ends]:", "0.300", 46)}
      <div class="dbtns"><div class="btn dspace">Debug</div><div class="btn">Cancel</div><div class="btn ok">OK</div></div>
    </div>`;
  }
}
